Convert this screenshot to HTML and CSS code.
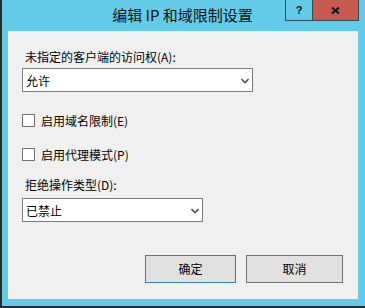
FILE: index.html
```html
<!DOCTYPE html>
<html lang="zh-CN">
<head>
    <meta charset="UTF-8">
    <title>编辑 IP 和域限制设置</title>
    <link rel="stylesheet" href="styles.css">
</head>
<body>
    <div class="window">
        <div class="titlebar">
            <div class="title">编辑 IP 和域限制设置</div>
            <div class="controls">
                <div class="btn-help">?</div>
                <div class="btn-close">
                    <svg width="9" height="7" viewBox="0 0 9 7">
                        <path d="M1 0.5 L8 6.5 M8 0.5 L1 6.5" stroke="#111" stroke-width="2" fill="none"/>
                    </svg>
                </div>
            </div>
        </div>

        <div class="client">
            <div class="field-label">未指定的客户端的访问权(A):</div>
            <div class="dropdown wide">
                <span>允许</span>
                <svg class="chevron" width="8" height="6" viewBox="0 0 8 6">
                    <path d="M0.5 1 L4 4.5 L7.5 1" stroke="#555" stroke-width="1.6" fill="none"/>
                </svg>
            </div>

            <div class="check-row first">
                <div class="checkbox"></div>
                <span>启用域名限制(E)</span>
            </div>
            <div class="check-row">
                <div class="checkbox"></div>
                <span>启用代理模式(P)</span>
            </div>

            <div class="field-label second">拒绝操作类型(D):</div>
            <div class="dropdown narrow">
                <span>已禁止</span>
                <svg class="chevron" width="8" height="6" viewBox="0 0 8 6">
                    <path d="M0.5 1 L4 4.5 L7.5 1" stroke="#555" stroke-width="1.6" fill="none"/>
                </svg>
            </div>

            <div class="buttons">
                <div class="button default">确定</div>
                <div class="button">取消</div>
            </div>
        </div>
    </div>
</body>
</html>
```

FILE: styles.css
```css
* {
    margin: 0;
    padding: 0;
    box-sizing: border-box;
}

body {
    background: #63cbe8;
    font-family: "Noto Sans CJK SC", "Liberation Sans", sans-serif;
    color: #000;
}

.window {
    width: 365px;
    height: 308px;
    background: #63cbe8;
    border-left: 2px solid #2b2b2b;
    border-bottom: 2px solid #2b2b2b;
    display: flex;
    flex-direction: column;
}

.titlebar {
    height: 31px;
    display: grid;
    margin-left: -2px;
}

.title {
    grid-area: 1 / 1;
    justify-self: center;
    font-size: 15px;
    line-height: 30px;
    color: #111;
}

.controls {
    grid-area: 1 / 1;
    justify-self: end;
    align-self: start;
    display: flex;
    margin-right: 6px;
    height: 21px;
    border: 1px solid #34495a;
    border-top: none;
}

.btn-help {
    width: 27px;
    border-right: 1px solid #34495a;
    font-family: "Liberation Sans", sans-serif;
    font-weight: bold;
    font-size: 11px;
    line-height: 20px;
    text-align: center;
    color: #111;
}

.btn-close {
    width: 45px;
    background: #c75a50;
    display: flex;
    align-items: center;
    justify-content: center;
}

.client {
    flex: 1;
    margin: 0 7px 7px 6px;
    background: #f0f0f0;
    padding: 18px 15px 16px 14px;
    display: flex;
    flex-direction: column;
    font-size: 12px;
}

.field-label {
    line-height: 16px;
    margin-left: 3px;
}

.field-label.second {
    margin-top: 15px;
}

.dropdown {
    margin-top: 3px;
    height: 24px;
    background: #fff;
    border: 1px solid #7a7a7a;
    display: flex;
    align-items: center;
    justify-content: space-between;
    padding: 0 3px 0 3px;
    font-size: 12px;
}

.dropdown.wide {
    width: 231px;
}

.dropdown.narrow {
    width: 181px;
    margin-top: 5px;
}

.chevron {
    margin-top: 1px;
}

.check-row {
    display: flex;
    align-items: center;
    height: 16px;
    margin-top: 18px;
}

.check-row.first {
    margin-top: 20px;
}

.checkbox {
    width: 13px;
    height: 13px;
    border: 1px solid #707070;
    background: #fff;
    margin-right: 6px;
}

.buttons {
    margin-top: auto;
    display: flex;
    justify-content: flex-end;
    gap: 10px;
}

.button {
    width: 97px;
    height: 28px;
    background: #e1e1e1;
    border: 1px solid #707070;
    text-align: center;
    line-height: 26px;
    font-size: 12px;
}

.button.default {
    width: 91px;
    border-color: #3c7fb1;
}
```
